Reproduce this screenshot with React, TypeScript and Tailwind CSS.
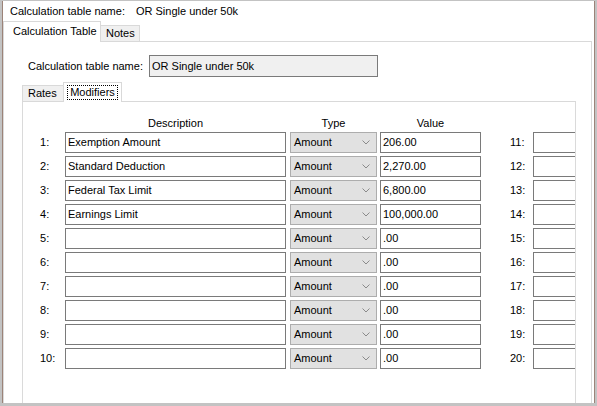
import React from "react";

const rows = [
  { n: 1, desc: "Exemption Amount", value: "206.00" },
  { n: 2, desc: "Standard Deduction", value: "2,270.00" },
  { n: 3, desc: "Federal Tax Limit", value: "6,800.00" },
  { n: 4, desc: "Earnings Limit", value: "100,000.00" },
  { n: 5, desc: "", value: ".00" },
  { n: 6, desc: "", value: ".00" },
  { n: 7, desc: "", value: ".00" },
  { n: 8, desc: "", value: ".00" },
  { n: 9, desc: "", value: ".00" },
  { n: 10, desc: "", value: ".00" },
];

function Chevron() {
  return (
    <svg width="8" height="5" viewBox="0 0 8 5" className="shrink-0">
      <polyline points="0.5,0.5 4,4 7.5,0.5" fill="none" stroke="#8a8a8a" strokeWidth="1" />
    </svg>
  );
}

function Row({ n, desc, value }: { n: number; desc: string; value: string }) {
  return (
    <div className="flex h-[21px] items-center pl-[17px]">
      <div className="w-[25px] shrink-0">{n}:</div>
      <div className="flex h-[21px] w-[221px] shrink-0 items-center border border-[#7a7a7a] bg-white pl-[2px]">
        {desc}
      </div>
      <div className="ml-[4px] flex h-[21px] w-[87px] shrink-0 items-center justify-between border border-[#adadad] bg-[#e1e1e1] pl-[3px] pr-[6px]">
        <span>Amount</span>
        <Chevron />
      </div>
      <div className="ml-[3px] flex h-[21px] w-[101px] shrink-0 items-center border border-[#7a7a7a] bg-white pl-[2px]">
        {value}
      </div>
      <div className="ml-[29px] w-[23px] shrink-0">{n + 10}:</div>
      <div className="h-[21px] w-[60px] shrink-0 border border-[#7a7a7a] bg-white"></div>
    </div>
  );
}

export default function App() {
  return (
    <div
      className="h-[406px] w-[597px] overflow-hidden bg-[#c3c3c3] pt-px pl-[2px] text-[11px] text-black"
      style={{ fontFamily: '"Liberation Sans", Arial, sans-serif' }}
    >
      <div className="flex h-[402px] w-[593px] flex-col border-x border-[#9c8378] bg-white">
        {/* header */}
        <div className="flex h-[20px] shrink-0 items-center pl-[7px]">
          <span>Calculation table name:</span>
          <span className="ml-[11px]">OR Single under 50k</span>
        </div>

        {/* outer tabs */}
        <div className="flex h-[21px] w-[589px] shrink-0 items-end">
          <div className="flex h-[21px] w-[98px] items-center border-x border-t border-[#d9d9d9] bg-white pl-[9px] pb-[2px]">
            Calculation Table
          </div>
          <div className="-ml-px flex h-[17px] w-[40px] items-center border border-[#d9d9d9] bg-[#f0f0f0] pl-[5px]">
            Notes
          </div>
          <div className="h-px flex-1 bg-[#d9d9d9]"></div>
        </div>

        {/* outer panel */}
        <div className="flex w-[589px] flex-1 flex-col overflow-hidden border-x border-[#dadada]">
          <div className="mt-[13px] flex h-[22px] items-center pl-[24px]">
            <span className="w-[121px]">Calculation table name:</span>
            <div className="flex h-[22px] w-[229px] items-center border border-[#7a7a7a] bg-[#f0f0f0] pl-[2px]">
              OR Single under 50k
            </div>
          </div>

          {/* inner tabs */}
          <div className="mt-[5px] ml-[18px] flex h-[20px] w-[554px] shrink-0 items-end">
            <div className="flex h-[17px] w-[42px] items-center border border-[#d9d9d9] bg-[#f0f0f0] pl-[5px]">
              Rates
            </div>
            <div className="-ml-px flex h-[20px] w-[59px] items-center justify-center border-x border-t border-[#d9d9d9] bg-white">
              <span className="flex h-[15px] items-center border border-dotted border-black px-[2px] leading-none">
                Modifiers
              </span>
            </div>
            <div className="h-px flex-1 bg-[#d9d9d9]"></div>
          </div>

          {/* inner panel */}
          <div className="ml-[18px] flex w-[554px] flex-1 flex-col overflow-hidden border-x border-[#dadada] pt-[14px]">
            <div className="flex h-[14px] items-center pl-[42px]">
              <div className="w-[221px] text-center">Description</div>
              <div className="ml-[4px] w-[87px] text-center">Type</div>
              <div className="ml-[3px] w-[101px] text-center">Value</div>
            </div>
            <div className="mt-[2px] flex flex-col gap-[3px]">
              {rows.map((r) => (
                <Row key={r.n} {...r} />
              ))}
            </div>
          </div>
        </div>
      </div>
    </div>
  );
}
